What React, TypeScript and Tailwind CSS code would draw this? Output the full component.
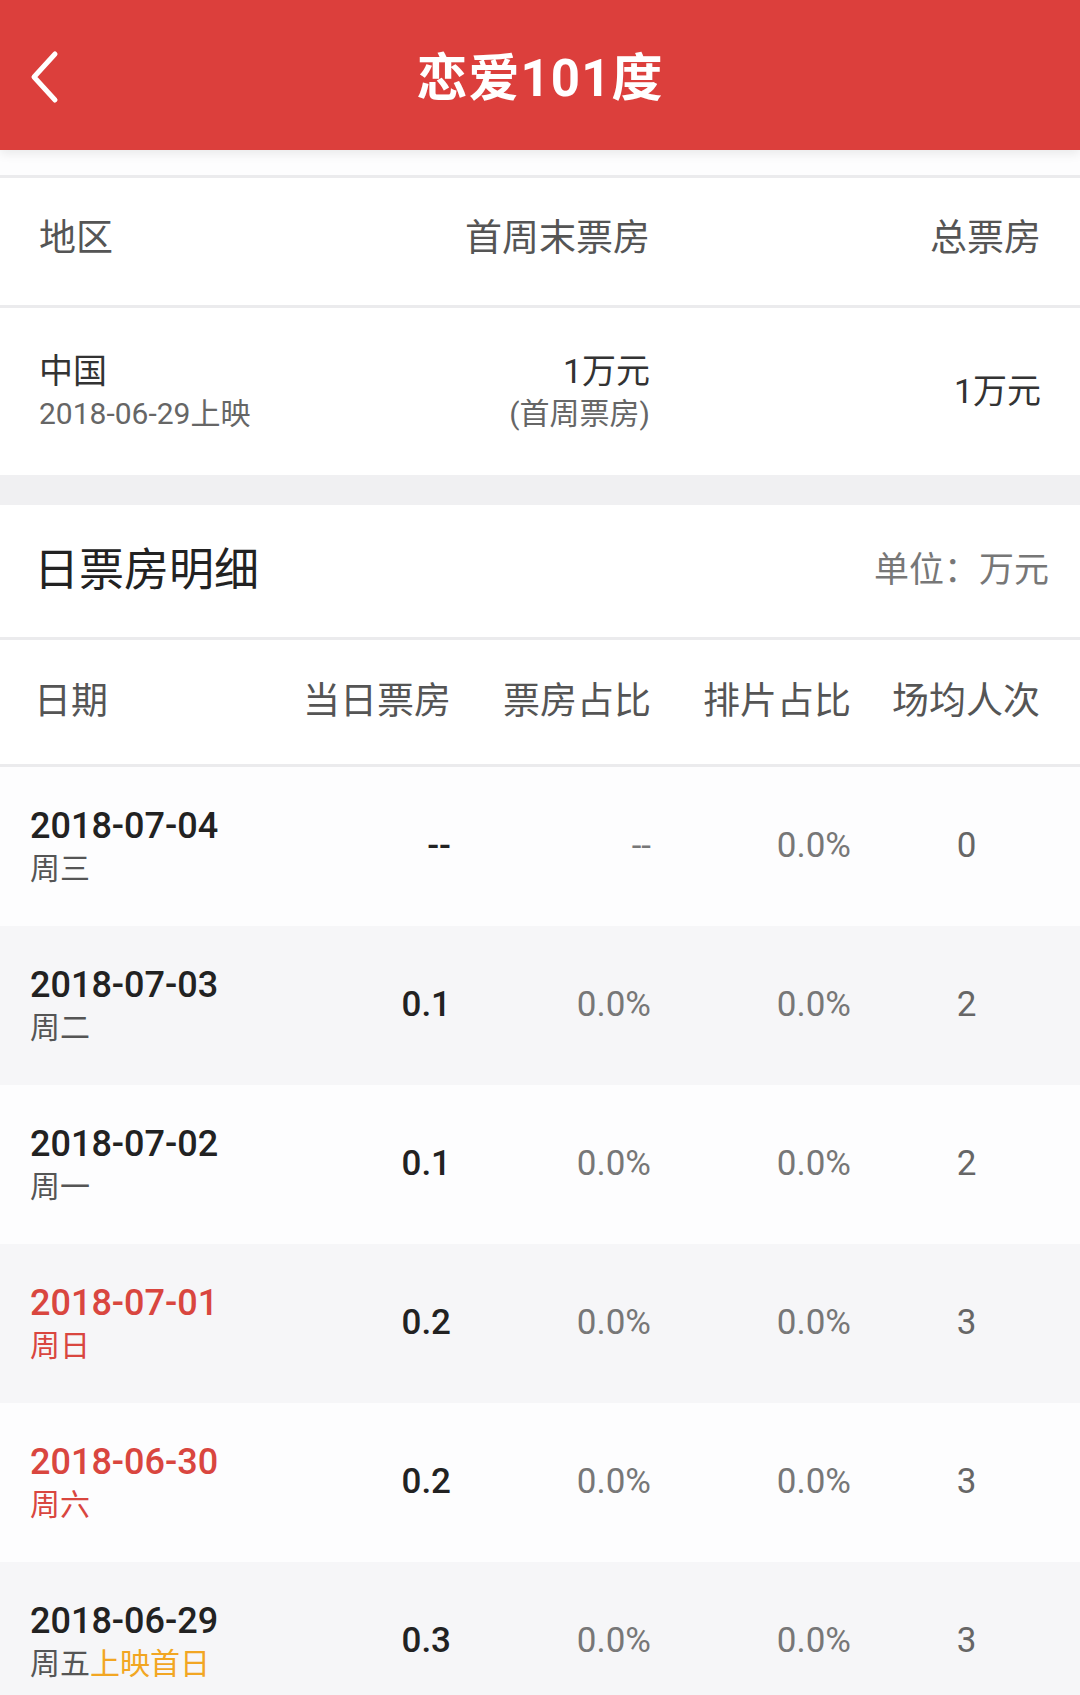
import React from 'react';

type Row = {
  date: string;
  week: string;
  tag?: string;
  red?: boolean;
  box: string;
  boxRate: string;
  showRate: string;
  avg: string;
};

const rows: Row[] = [
  { date: '2018-07-04', week: '周三', box: '--', boxRate: '--', showRate: '0.0%', avg: '0' },
  { date: '2018-07-03', week: '周二', box: '0.1', boxRate: '0.0%', showRate: '0.0%', avg: '2' },
  { date: '2018-07-02', week: '周一', box: '0.1', boxRate: '0.0%', showRate: '0.0%', avg: '2' },
  { date: '2018-07-01', week: '周日', red: true, box: '0.2', boxRate: '0.0%', showRate: '0.0%', avg: '3' },
  { date: '2018-06-30', week: '周六', red: true, box: '0.2', boxRate: '0.0%', showRate: '0.0%', avg: '3' },
  { date: '2018-06-29', week: '周五', tag: '上映首日', box: '0.3', boxRate: '0.0%', showRate: '0.0%', avg: '3' },
];

const font = { fontFamily: 'Roboto, "Noto Sans CJK SC", sans-serif' };

const App: React.FC = () => {
  return (
    <div className="w-[1080px] min-h-[1695px] bg-white overflow-hidden" style={font}>
      {/* top bar */}
      <div className="relative h-[150px] bg-[#dc3f3c] flex items-center justify-center pt-[8px] shadow-[0_4px_10px_rgba(0,0,0,0.08)]">
        <svg className="absolute left-[28px] top-[50px]" width="34" height="54" viewBox="0 0 34 54">
          <polyline points="27,4 6,27 27,50" fill="none" stroke="white" strokeWidth="5" strokeLinecap="round" strokeLinejoin="round" />
        </svg>
        <h1 className="text-white text-[51px] font-bold tracking-[1px]">恋爱101度</h1>
      </div>

      <div className="h-[25px] bg-[#fdfdfe]" />

      {/* region summary */}
      <div className="border-t-[3px] border-[#ebebed]">
        <div className="h-[127px] flex items-center px-[39px] pb-[6px] text-[37px] text-[#555]">
          <div className="flex-1">地区</div>
          <div className="w-[300px] text-right">首周末票房</div>
          <div className="w-[391px] text-right">总票房</div>
        </div>
        <div className="h-[170px] border-t-[3px] border-[#ebebed] flex items-center px-[39px]">
          <div className="flex-1 flex flex-col">
            <span className="text-[34px] text-[#333] leading-[44px]">中国</span>
            <span className="text-[30px] text-[#666] leading-[42px]">2018-06-29上映</span>
          </div>
          <div className="w-[300px] flex flex-col items-end">
            <span className="text-[34px] text-[#333] leading-[44px]">1万元</span>
            <span className="text-[30px] text-[#666] leading-[42px]">(首周票房)</span>
          </div>
          <div className="w-[391px] text-right text-[34px] text-[#333]">1万元</div>
        </div>
      </div>

      <div className="h-[30px] bg-[#f0f0f2]" />

      {/* daily detail */}
      <div className="h-[132px] flex items-center justify-between pl-[34px] pr-[31px]">
        <span className="text-[45px] text-[#222]">日票房明细</span>
        <span className="text-[35px] text-[#777]">单位：万元</span>
      </div>

      <div className="border-t-[3px] border-[#ebebed] h-[127px] grid grid-cols-[1fr_200px_200px_200px_189px] items-center pl-[34px] pr-[40px] text-[37px] text-[#555]">
        <div>日期</div>
        <div className="text-right">当日票房</div>
        <div className="text-right">票房占比</div>
        <div className="text-right">排片占比</div>
        <div className="text-right">场均人次</div>
      </div>

      <div className="border-t-[3px] border-[#ebebed]">
        {rows.map((r, i) => (
          <div
            key={r.date}
            className={
              'h-[159px] grid grid-cols-[1fr_200px_200px_200px_189px] items-center pl-[30px] pr-[40px] ' +
              (i % 2 === 1 ? 'bg-[#f6f6f8]' : 'bg-[#fdfdfe]')
            }
          >
            <div className="flex flex-col">
              <span className={'text-[36px] font-medium leading-[44px] ' + (r.red ? 'text-[#d9463f]' : 'text-[#222]')}>
                {r.date}
              </span>
              <span className={'text-[30px] leading-[42px] ' + (r.red ? 'text-[#d9463f]' : 'text-[#555]')}>
                {r.week}
                {r.tag && <span className="text-[#f2a623]">{r.tag}</span>}
              </span>
            </div>
            <div className="text-right text-[35px] font-medium text-[#222]">{r.box}</div>
            <div className={'text-right text-[35px] text-[#777] ' + (r.boxRate === '--' ? 'text-[28px]' : '')}>
              {r.boxRate}
            </div>
            <div className="text-right text-[35px] text-[#777]">{r.showRate}</div>
            <div className="flex justify-end">
              <div className="w-[147px] text-center text-[35px] text-[#666]">{r.avg}</div>
            </div>
          </div>
        ))}
      </div>
    </div>
  );
};

export default App;
